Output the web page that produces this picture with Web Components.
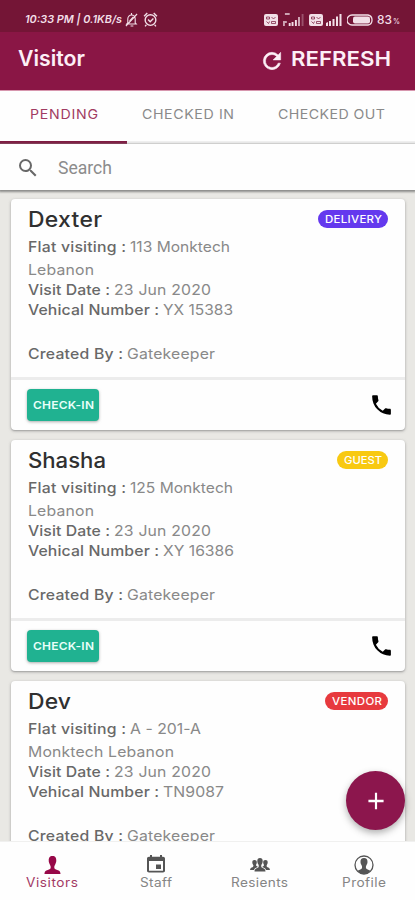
<!DOCTYPE html>
<html lang="en"><head><meta charset="utf-8"><title>Visitor</title>
<style>html,body{margin:0;height:100%;overflow:hidden}body{font-family:Inter,"Open Sans",sans-serif}</style></head>
<body><visitor-app></visitor-app>
<script>
const define=(name,html,init)=>customElements.define(name,class extends HTMLElement{
  connectedCallback(){
    if(this.shadowRoot)return;
    const t=document.createElement('template');
    t.innerHTML=typeof html==='function'?html(this):html;
    this.attachShadow({mode:'open'}).append(t.content.cloneNode(true));
    if(init)init(this);
  }
});
// Inline label that fills the width in its "w" attribute by widening glyphs and tracking.
define('fit-text','<style>:host{display:inline-block;white-space:nowrap;text-align:left}span{display:inline-block;transform-origin:0 50%}</style><span><slot></slot></span>',el=>{
  const s=el.shadowRoot.querySelector('span'),w=+el.getAttribute('w');
  el.style.width=w+'px';
  const n=el.textContent.length,nat=s.getBoundingClientRect().width;
  const k=Math.max(.9,Math.min(1.09,w/nat));
  s.style.letterSpacing=((w/k-nat)/(n-1))+'px';
  s.style.transform=`scaleX(${k})`;
});
const icons={
 refresh:['0 0 24 24','<path d="M17.65 6.35A7.96 7.96 0 0 0 12 4a8 8 0 1 0 7.73 10h-2.08A6 6 0 1 1 12 6c1.66 0 3.14.69 4.22 1.78L13 11h7V4z" stroke="currentColor" stroke-width=".5"/>'],
 search:['0 0 24 24','<path d="M15.5 14h-.79l-.28-.27A6.47 6.47 0 0 0 16 9.5 6.5 6.5 0 1 0 9.5 16c1.61 0 3.09-.59 4.23-1.57l.27.28v.79l5 4.99L20.49 19zm-6 0a4.5 4.5 0 1 1 0-9 4.5 4.5 0 0 1 0 9z"/>'],
 call:['0 0 24 24','<path d="M6.62 10.79a15.1 15.1 0 0 0 6.59 6.59l2.2-2.2c.27-.27.67-.36 1.02-.24 1.12.37 2.33.57 3.57.57.55 0 1 .45 1 1V20c0 .55-.45 1-1 1A17 17 0 0 1 3 4c0-.55.45-1 1-1h3.5c.55 0 1 .45 1 1 0 1.25.2 2.45.57 3.57.11.35.03.74-.25 1.02z"/>'],
 plus:['0 0 24 24','<path d="M19 13h-6v6h-2v-6H5v-2h6V5h2v6h6z"/>'],
 person:['0 0 18 18','<path d="M9 0C5.900 0 5 2 5 4.300c0 1.700.3 2.500.9 3.700.7 1.300 1.300 2.200 1.200 3.500-.1 1.500-1.100 1.900-3.100 2.500C1.800 14.700.8 15 .5 18h17c-.3-3-1.300-3.300-3.500-4-2-.6-3-1-3.100-2.500-.1-1.300.5-2.200 1.200-3.500.6-1.200.9-2 .9-3.700C13 2 12.100 0 9 0z"/>'],
 calendar:['0 0 24 24','<path d="M17 12h-5v5h5zM16 1v2H8V1H6v2H5c-1.100 0-2 .9-2 2v14c0 1.100.9 2 2 2h14c1.100 0 2-.9 2-2V5c0-1.100-.9-2-2-2h-1V1zm3 18H5V8h14z"/>'],
 group:['0 0 20 14','<path d="M10 0C8.200 0 7.300 1.100 7.300 3c0 1.600.5 2.500 1 3.300.6 1.100.6 1.900.3 2.700-.4.800-1.500 1-2.300 1.400-1.200.5-1.700 1.200-1.800 3.100h11c-.1-1.900-.6-2.600-1.800-3.100-.8-.4-1.900-.6-2.300-1.400-.3-.8-.3-1.600.3-2.700.5-.8 1-1.700 1-3.300C12.700 1.100 11.800 0 10 0z"/><path d="M4.500 2C3 2 2.300 2.900 2.300 4.200c0 1.200.4 1.900.8 2.500.5.9.4 1.700-.2 2.200C1.700 9.500.2 9.500 0 12h4c.3-1.400 1-2 2.700-2.600.5-.2.9-.4 1-.8-.9-.3-1.800-.8-1.700-1.700C6.500 6.100 6.800 5.500 6.800 4.200 6.800 2.900 6 2 4.500 2z"/><path transform="matrix(-1 0 0 1 20 0)" d="M4.500 2C3 2 2.300 2.900 2.300 4.200c0 1.200.4 1.900.8 2.500.5.9.4 1.700-.2 2.200C1.700 9.500.2 9.500 0 12h4c.3-1.400 1-2 2.700-2.600.5-.2.9-.4 1-.8-.9-.3-1.800-.8-1.700-1.700C6.500 6.100 6.800 5.500 6.800 4.200 6.800 2.900 6 2 4.500 2z"/>'],
 profile:['0 0 20 20','<circle cx="10" cy="10" r="9" fill="none" stroke="currentColor" stroke-width="1.300"/><path d="M10 3C7.500 3 6.400 4.600 6.500 7c.1 1.800.7 2.600 1.200 3.600.5 1.100.6 2.200-.1 3.100-.9 1-2.600 1.100-4.100 2.100C5 17.900 7.300 19 10 19s5-1.100 6.500-3.200c-1.500-1-3.200-1.100-4.100-2.100-.7-.9-.6-2-.1-3.100.5-1 1.100-1.800 1.200-3.600C13.600 4.600 12.500 3 10 3z"/>'],
 muted:['0 0 14 14','<g fill="none" stroke="currentColor" stroke-width="1.200"><path d="M3 10V6a4 4 0 0 1 8 0v4l1 1H2zM6 13h3M13 1 1 13"/><path d="M7 0v2M5 8l4-4"/></g>'],
 alarm:['0 0 14 14','<g fill="none" stroke="currentColor" stroke-width="1.300"><circle cx="7" cy="7.500" r="5"/><path d="m4.700 7 2 2 3-3M1 4l3-3M13 4l-3-3M3 12l-1 1.500M11 12l1 1.500"/></g>'],
 sim:['0 0 14 12','<rect width="14" height="12" rx="2"/><path d="M2.500 3h3v2h-3zm5 0 2 2 2-2M2.500 7.500l2 2 1-2m2 0h4v2h-4z" fill="none" stroke="#741536" stroke-width=".7"/>'],
 bars:['0 0 16 12','<path d="M0 12v-3l2-1v4zM3 12V7h2v5zM6.500 12V5h2v7zM10 12V2.500h2V12zM13.500 12V0h2v12z"/>'],
 barsdim:['0 0 22 13','<path opacity=".7" d="M2 0h5v2H2zM0 8h4v2H2v3H0z"/><path d="M6 13v-3h2v3zM9 13V9h2v4zM12.500 13V7h2v6zM16 13V4h1.500v9z"/><path opacity=".3" d="M19.500 1h2v12h-2z"/>'],
 battery:['0 0 27 12','<path d="M6 1H5a5 5 0 0 0 0 10h16a5 5 0 0 0 4-5 5 5 0 0 0-4-5z" fill="none" stroke="currentColor" stroke-width="1.300"/><rect x="6" y="2.500" width="17" height="7" rx="2"/>']
};
define('ui-icon',el=>{const i=icons[el.getAttribute('name')];
 return `<style>:host{display:block;flex:none;width:${el.getAttribute('w')}px;height:${el.getAttribute('h')}px}svg{display:block;width:100%;height:100%;fill:currentColor}</style><svg viewBox="${i[0]}" preserveAspectRatio="none">${i[1]}</svg>`});
define('status-bar',`<style>
:host{display:flex;align-items:center;box-sizing:border-box;height:32px;padding:7px 15px 0 25px;background:#741536;color:#f2dfe7;font:italic 600 10.500px/14px Inter,sans-serif}
ui-icon[name=muted]{margin-left:3px}ui-icon[name=alarm]{margin-left:5px}.r{margin-left:auto;display:flex;align-items:center;gap:5px}.n{font-style:normal;font-size:12px;font-weight:500}small{font:500 7px/8px Inter,sans-serif;align-self:flex-end;margin-left:-4px;padding-bottom:1px}
</style><fit-text w="97">10:33 PM | 0.1KB/s</fit-text><ui-icon name="muted" w="13" h="14"></ui-icon><ui-icon name="alarm" w="15" h="15"></ui-icon>
<div class="r"><ui-icon name="sim" w="14" h="12"></ui-icon><ui-icon name="barsdim" w="21" h="13"></ui-icon><ui-icon name="sim" w="14" h="12"></ui-icon><ui-icon style="margin-left:-2px" name="bars" w="16" h="12"></ui-icon><ui-icon name="battery" w="27" h="12"></ui-icon><fit-text class="n" w="15" style="margin-left:-2px">83</fit-text><small>%</small></div>`);
define('app-header',`<style>
:host{display:flex;align-items:center;box-sizing:border-box;height:59px;padding:0 24px 4px 18px;background:#8a1645;border-bottom:1px solid #d796ae;color:#fdeff6}
.t{font-size:21px;font-weight:600;line-height:28px}.a{margin-left:auto;display:flex;align-items:center;gap:6px}.a fit-text{font-size:20.500px;font-weight:600;line-height:28px}
ui-icon{margin-top:4px}</style><fit-text class="t" w="67">Visitor</fit-text><div class="a"><ui-icon name="refresh" w="26" h="26"></ui-icon><fit-text w="100">REFRESH</fit-text></div>`);
define('tab-strip',`<style>
:host{display:grid;grid-template-columns:127px 121px 1fr;height:53px;background:#fefefe;color:#8a8a8a;font-size:13px;line-height:17px}
div{box-sizing:border-box;padding-top:15px;border-bottom:3px solid #efefef;text-align:center}
.on{color:#a13b62;border-color:#7e1b42}</style><div class="on"><fit-text w="68">PENDING</fit-text></div><div><fit-text w="92">CHECKED IN</fit-text></div><div><fit-text w="107">CHECKED OUT</fit-text></div>`);
define('search-bar',`<style>
:host{display:flex;align-items:center;box-sizing:border-box;height:46px;padding:2px 17px 0 16px;gap:18px;background:#fefefe;color:#686868;position:relative;box-shadow:0 1px 2px 1px #8c8c8a}
fit-text{font:18px/22px Roboto,sans-serif;color:#8c8c8c}</style><ui-icon name="search" w="24" h="24"></ui-icon><fit-text w="54">Search</fit-text>`);
define('status-badge',`<style>:host{display:flex;align-items:center;justify-content:center;box-sizing:border-box;height:18px;border-radius:9px;color:#fff;font-size:10.500px;font-weight:500;line-height:19px}</style><slot></slot>`);
define('visitor-card',el=>{const a=n=>el.getAttribute(n),f=(n)=>{const[t,w]=a(n).split('|');return `<fit-text w="${w}">${t}</fit-text>`};
const[bt,bw,pw,bc]=a('badge').split('|');
return `<style>
:host{display:block;flex:none;box-sizing:border-box;height:231px;background:#fefefe;border-radius:4px;box-shadow:0 1px 3px #77777799,0 1px 1px #99999955}
header{display:flex;justify-content:space-between;height:38px;padding:8px 17px 0 17px;box-sizing:border-box}
header>fit-text{font-size:21px;font-weight:500;line-height:25px;color:#303030}
status-badge{margin-top:3px;width:${pw}px;background:${bc}}
main{height:143px;box-sizing:border-box;padding:0 17px;border-bottom:3px solid #ececec;font-size:14.500px;color:#898989}
p{margin:0;height:20px;line-height:20px;display:flex;gap:4px}p:first-child{height:23px}b{font-weight:500;color:#686868}p:last-child{margin-top:24px}
footer{display:flex;align-items:center;justify-content:space-between;padding:9px 11px 0 16px}
button{all:unset;box-sizing:border-box;width:72px;height:32px;border-radius:4px;background:#20b291;color:#e9fff9;font-size:11px;font-weight:600;line-height:31px;text-align:center;box-shadow:0 1px 3px #7779}
</style><header>${f('name')}<status-badge><fit-text w="${bw}">${bt}</fit-text></status-badge></header>
<main><p><b><fit-text w="98">Flat visiting :</fit-text></b>${f('flat')}</p><p>${f('flat2')}</p><p><b><fit-text w="82">Visit Date :</fit-text></b><fit-text w="97">23 Jun 2020</fit-text></p><p><b><fit-text w="131">Vehical Number :</fit-text></b>${f('vehicle')}</p><p><b><fit-text w="95">Created By :</fit-text></b><fit-text w="88">Gatekeeper</fit-text></p></main>
<footer><button><fit-text w="61">CHECK-IN</fit-text></button><ui-icon name="call" w="25" h="26"></ui-icon></footer>`});
define('visitor-list',`<style>:host{display:flex;flex-direction:column;gap:10px;height:651px;box-sizing:border-box;padding:9px 10px 0 11px;background:#e9e8e4;overflow:hidden}</style><slot></slot>`);
define('bottom-nav',`<style>
:host{display:flex;justify-content:space-around;height:59px;background:#fefefe;color:#555;font-size:12.500px;line-height:16px;position:relative;border-top:1px solid #f0f0ef;box-sizing:border-box}
div{flex:1;display:flex;flex-direction:column;align-items:center;padding:13px 0 0 1px}ui-icon{margin-bottom:1px}fit-text{color:#858585}.on{color:#970848}.on fit-text{color:#a33a65}i{height:20px;display:flex;align-items:center;font-style:normal}
</style><div class="on"><i><ui-icon name="person" w="17" h="18"></ui-icon></i><fit-text w="52">Visitors</fit-text></div><div><i><ui-icon name="calendar" w="24" h="21"></ui-icon></i><fit-text w="32">Staff</fit-text></div><div><i><ui-icon name="group" w="20" h="14"></ui-icon></i><fit-text w="57">Resients</fit-text></div><div><i><ui-icon name="profile" w="20" h="20"></ui-icon></i><fit-text w="44">Profile</fit-text></div>`);
define('add-button',`<style>:host{position:absolute;right:10px;bottom:70px;width:59px;height:59px;border-radius:50%;background:#8c164d;color:#fff;display:flex;align-items:center;justify-content:center;box-shadow:0 3px 7px #5557}</style><ui-icon name="plus" w="26" h="28"></ui-icon>`);
define('visitor-app',`<style>:host{display:flex;flex-direction:column;position:relative;width:415px;height:900px;overflow:hidden;background:#e9e8e4}</style>
<status-bar></status-bar><app-header></app-header><tab-strip></tab-strip><search-bar></search-bar>
<visitor-list>
<visitor-card name="Dexter|74" flat="113 Monktech|100" flat2="Lebanon|66" vehicle="YX 15383|70" badge="DELIVERY|57|70|#6439ee"></visitor-card>
<visitor-card name="Shasha|78" flat="125 Monktech|103" flat2="Lebanon|66" vehicle="XY 16386|71" badge="GUEST|38|51|#f8c912"></visitor-card>
<visitor-card name="Dev|43" flat="A - 201-A|71" flat2="Monktech Lebanon|146" vehicle="TN9087|61" badge="VENDOR|50|63|#e73a3e"></visitor-card>
</visitor-list><bottom-nav></bottom-nav><add-button></add-button>`);
</script></body></html>
